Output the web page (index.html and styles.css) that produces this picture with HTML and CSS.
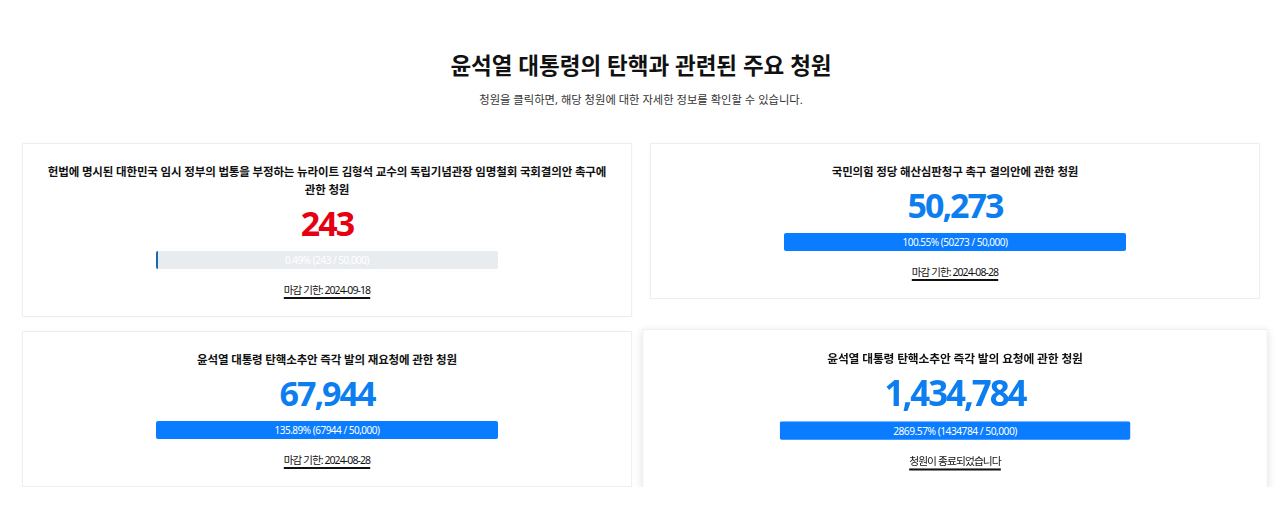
FILE: index.html
```html
<!DOCTYPE html>
<html lang="ko">
<head>
<meta charset="utf-8">
<title>주요 청원</title>
<link rel="stylesheet" href="styles.css">
</head>
<body>
<main class="page">
  <header class="intro">
    <h1 class="intro-title">윤석열 대통령의 탄핵과 관련된 주요 청원</h1>
    <p class="intro-sub">청원을 클릭하면, 해당 청원에 대한 자세한 정보를 확인할 수 있습니다.</p>
  </header>
  <section class="grid">
    <article class="card">
      <h2 class="card-title">헌법에 명시된 대한민국 임시 정부의 법통을 부정하는 뉴라이트 김형석 교수의 독립기념관장 임명철회 국회결의안 촉구에 관한 청원</h2>
      <div class="count count-low">243</div>
      <div class="bar">
        <div class="bar-fill bar-fill-low" style="width:0.49%"></div>
        <div class="bar-label">0.49% (243 / 50,000)</div>
      </div>
      <a class="deadline" href="#">마감 기한: 2024-09-18</a>
    </article>
    <article class="card">
      <h2 class="card-title">국민의힘 정당 해산심판청구 촉구 결의안에 관한 청원</h2>
      <div class="count">50,273</div>
      <div class="bar">
        <div class="bar-fill" style="width:100%"></div>
        <div class="bar-label">100.55% (50273 / 50,000)</div>
      </div>
      <a class="deadline" href="#">마감 기한: 2024-08-28</a>
    </article>
    <article class="card">
      <h2 class="card-title">윤석열 대통령 탄핵소추안 즉각 발의 재요청에 관한 청원</h2>
      <div class="count">67,944</div>
      <div class="bar">
        <div class="bar-fill" style="width:100%"></div>
        <div class="bar-label">135.89% (67944 / 50,000)</div>
      </div>
      <a class="deadline" href="#">마감 기한: 2024-08-28</a>
    </article>
    <article class="card card-hover">
      <h2 class="card-title">윤석열 대통령 탄핵소추안 즉각 발의 요청에 관한 청원</h2>
      <div class="count">1,434,784</div>
      <div class="bar">
        <div class="bar-fill" style="width:100%"></div>
        <div class="bar-label">2869.57% (1434784 / 50,000)</div>
      </div>
      <a class="deadline" href="#">청원이 종료되었습니다</a>
    </article>
  </section>
</main>
</body>
</html>
```

FILE: styles.css
```css
* { box-sizing: border-box; }

html, body {
  margin: 0;
  padding: 0;
  background: #ffffff;
}

body {
  font-family: "Noto Sans", "Noto Sans CJK KR", sans-serif;
  color: #111111;
}

.page {
  width: 1238px;
  margin: 0 0 0 22px;
  padding-top: 51px;
}

.intro {
  text-align: center;
}

.intro-title {
  margin: 0;
  font-size: 22.5px;
  line-height: 30px;
  font-weight: 700;
  letter-spacing: 0;
  color: #111111;
}

.intro-sub {
  margin: 11px 0 0;
  font-size: 11.3px;
  line-height: 16px;
  letter-spacing: 0;
  color: #333333;
}

.grid {
  margin-top: 35px;
  display: grid;
  grid-template-columns: 1fr 1fr;
  column-gap: 18px;
  row-gap: 14px;
  align-items: start;
}

.card {
  background: #ffffff;
  border: 1px solid #efefef;
  box-shadow: 0 0 3px rgba(0, 0, 0, 0.03);
  padding: 19px 19px 18px;
  display: flex;
  flex-direction: column;
  align-items: center;
  text-align: center;
}

.card-hover {
  transform: scale(1.025);
  box-shadow: 0 2px 8px rgba(0, 0, 0, 0.12);
}

.card-title {
  margin: 0;
  font-size: 11.5px;
  line-height: 18px;
  font-weight: 700;
  letter-spacing: -0.15px;
  color: #111111;
}

.count {
  margin-top: 4px;
  font-size: 34px;
  line-height: 41px;
  font-weight: 700;
  letter-spacing: -2px;
  color: #0d7ef0;
}

.count-low {
  color: #e60012;
}

.bar {
  margin-top: 7px;
  width: 60%;
  height: 18px;
  display: grid;
  background: #e9ecef;
  border-radius: 2px;
  overflow: hidden;
}

.bar-fill,
.bar-label {
  grid-area: 1 / 1;
}

.bar-fill {
  height: 100%;
  background: #0a7cff;
}

.bar-fill-low {
  background: #1769b0;
}

.bar-label {
  font-size: 10px;
  line-height: 18px;
  letter-spacing: -0.5px;
  color: #ffffff;
  text-align: center;
}

.deadline {
  margin-top: 13px;
  font-size: 10.5px;
  line-height: 16px;
  letter-spacing: -0.9px;
  color: #111111;
  text-decoration: underline;
  text-decoration-thickness: 1.5px;
  text-underline-offset: 3px;
}
```
